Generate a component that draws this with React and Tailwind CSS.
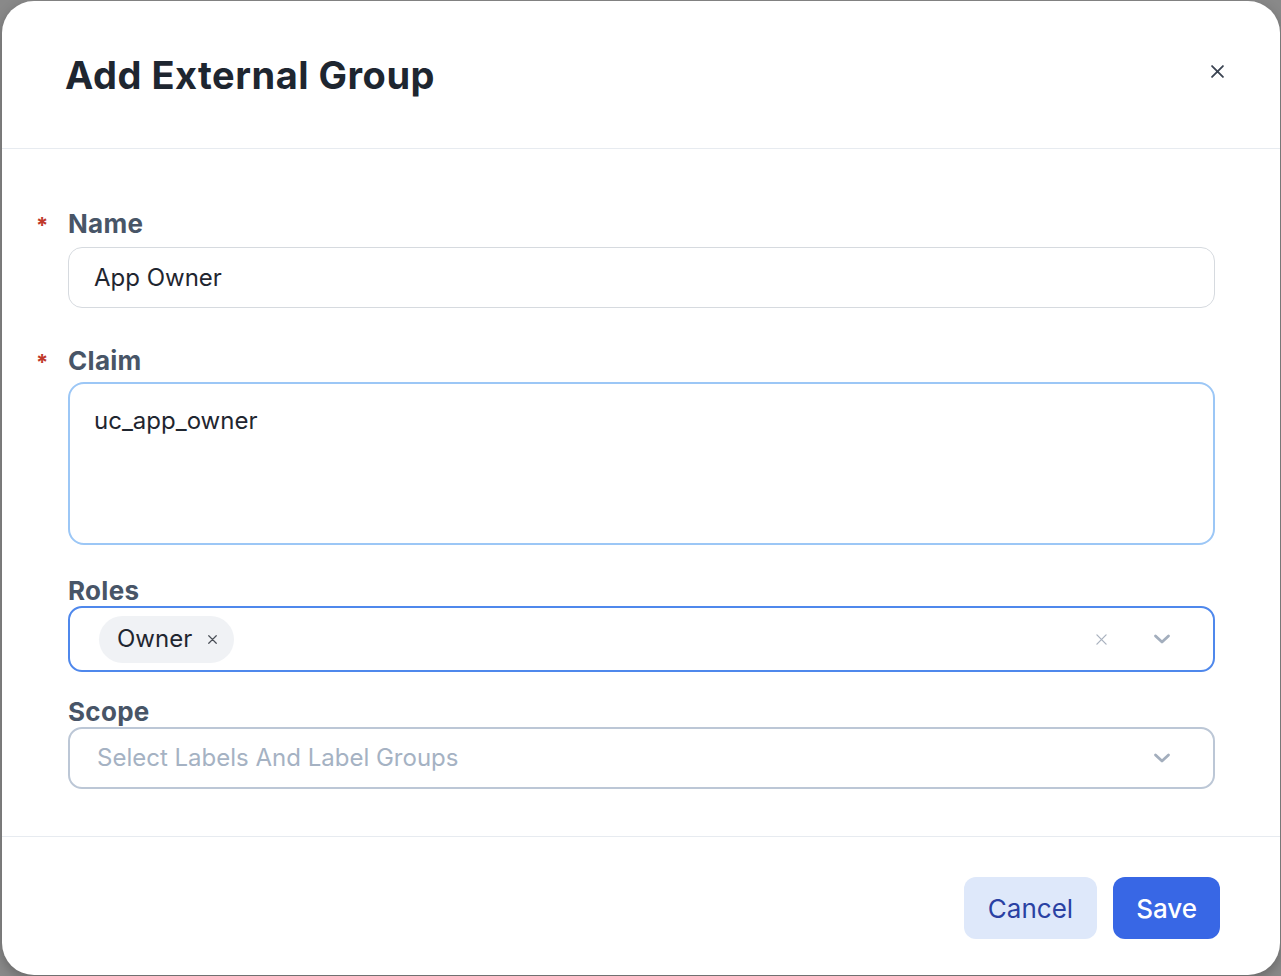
import React from "react";

const font = { fontFamily: "Inter, 'Noto Sans', sans-serif" };

function Req({ children }) {
  return (
    <div className="flex items-start -ml-[32px] h-[32px]">
      <span className="w-[32px] pt-[3px] text-[22px] leading-[28px] font-bold text-[#c0392b]">*</span>
      <span className="text-[26px] leading-[32px] font-bold tracking-[0.3px] text-[#485567]">{children}</span>
    </div>
  );
}

function Label({ children }) {
  return <div className="h-[32px] text-[26px] leading-[32px] font-bold tracking-[0.3px] text-[#485567]">{children}</div>;
}

function Chevron() {
  return (
    <svg width="18" height="12" viewBox="0 0 18 12" fill="none">
      <path d="M2.5 3L9 9L15.5 3" stroke="#a3aebd" strokeWidth="2.8" strokeLinecap="round" strokeLinejoin="round" />
    </svg>
  );
}

function Cross({ size = 12, color = "#3b4452", w = 1.8 }) {
  return (
    <svg width={size} height={size} viewBox="0 0 12 12" fill="none">
      <path d="M1 1L11 11M11 1L1 11" stroke={color} strokeWidth={w} strokeLinecap="round" />
    </svg>
  );
}

export default function App() {
  return (
    <div className="w-[1281px] h-[976px] bg-[#898989] pl-[2px] pt-[1px] pr-[1px] pb-[1px]" style={font}>
      <div className="bg-white rounded-[32px] h-full flex flex-col overflow-hidden shadow-[0_4px_12px_rgba(0,0,0,0.25)]">
        <div className="h-[148px] flex items-center justify-between pl-[63px] pr-[56px] border-b-[1.5px] border-[#e7ebf0] shrink-0">
          <h1 className="text-[38px] leading-[46px] font-bold text-[#1e2630] tracking-[0.5px]">Add External Group</h1>
          <div className="mb-[6px]">
            <Cross size={13} color="#3b4452" w={1.7} />
          </div>
        </div>
        <div className="flex-1 pl-[66px] pr-[65px] pt-[59px]">
          <Req>Name</Req>
          <div className="mt-[7px] h-[61px] rounded-[14px] border-[1.5px] border-[#d6dadf] flex items-center px-[25px] text-[24px] text-[#1f2630]">
            App Owner
          </div>
          <div className="mt-[37px]">
            <Req>Claim</Req>
          </div>
          <div className="mt-[5px] h-[163px] rounded-[16px] border-[2px] border-[#9cc7f6] px-[24px] pt-[21px] text-[24px] leading-[32px] text-[#1f2630]">
            uc_app_owner
          </div>
          <div className="mt-[30px]">
            <Label>Roles</Label>
          </div>
          <div className="-mt-[1px] h-[66px] rounded-[14px] border-[2px] border-[#4f88ec] flex items-center pl-[29px] pr-[42px]">
            <div className="h-[47px] rounded-full bg-[#f0f2f5] flex items-center pl-[18px] pr-[17px] gap-[16px]">
              <span className="text-[24px] text-[#1f2630]">Owner</span>
              <Cross size={9} color="#4a4f57" w={1.6} />
            </div>
            <div className="flex-1" />
            <Cross size={11} color="#a9b2bf" w={1.4} />
            <div className="w-[46px]" />
            <Chevron />
          </div>
          <div className="mt-[24px]">
            <Label>Scope</Label>
          </div>
          <div className="-mt-[1px] h-[62px] rounded-[14px] border-[2px] border-[#bcc7d6] flex items-center pl-[27px] pr-[42px]">
            <span className="flex-1 text-[24px] text-[#a5b2c3]">Select Labels And Label Groups</span>
            <Chevron />
          </div>
        </div>
        <div className="h-[139px] shrink-0 border-t-[1.5px] border-[#e7ebf0] flex items-start justify-end pt-[40px] pr-[60px] gap-[16px]">
          <button className="h-[62px] px-[24px] rounded-[12px] bg-[#dee8fa] text-[26px] text-[#2a41a3]">Cancel</button>
          <button className="h-[62px] px-[23px] rounded-[12px] bg-[#3867e5] text-[26px] font-medium text-white">Save</button>
        </div>
      </div>
    </div>
  );
}
